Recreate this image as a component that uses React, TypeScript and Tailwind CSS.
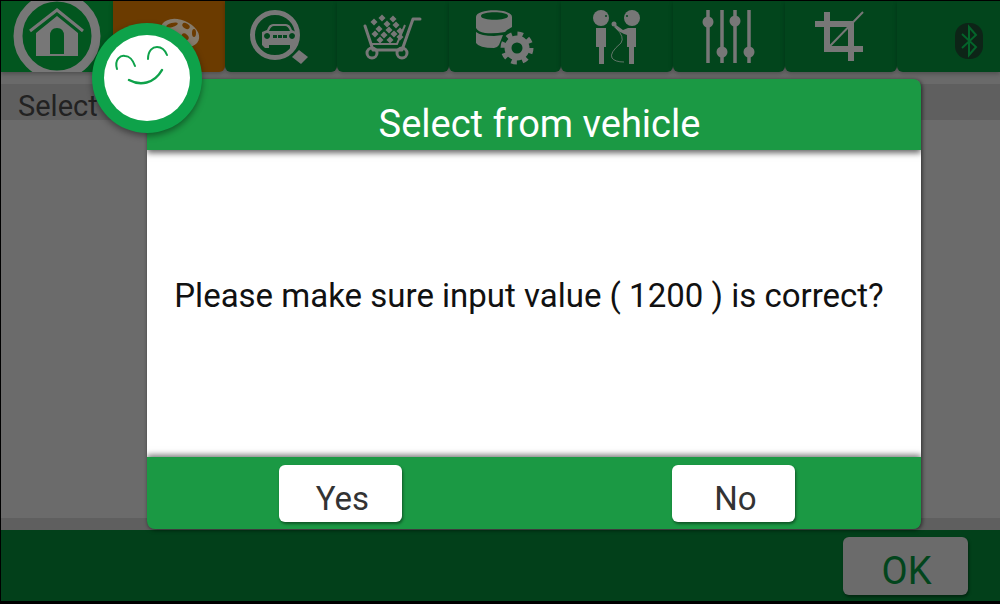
import React from 'react';

const G = '#777777';
const D = '#02451c';

const HomeIcon = () => (
  <svg width="112" height="71" viewBox="0 0 112 71" fill="none">
    <circle cx="56" cy="35" r="39" stroke={G} strokeWidth="9" />
    <path d="M29 30 L56 9 L82 30" stroke={G} strokeWidth="3" />
    <path fillRule="evenodd" clipRule="evenodd" d="M56 15 L77 32 V55 H35 V32 Z M49 53 H63 V35 Q63 27 56 27 Q49 27 49 35 Z" fill={G} />
  </svg>
);

const GlobeIcon = () => (
  <svg width="112" height="71" viewBox="0 0 112 71" fill="none">
    <ellipse cx="67" cy="32" rx="20" ry="13" transform="rotate(22 67 32)" fill="#857b6c" />
    <ellipse cx="59" cy="24" rx="6" ry="2" transform="rotate(-15 59 24)" fill="#6b3b00" />
    <ellipse cx="73" cy="25" rx="4" ry="2.5" transform="rotate(30 73 25)" fill="#6b3b00" />
    <ellipse cx="81" cy="32" rx="2" ry="4" fill="#6b3b00" />
    <ellipse cx="72" cy="36" rx="4" ry="3" transform="rotate(40 72 36)" fill="#6b3b00" />
  </svg>
);

const CarSearchIcon = () => (
  <svg width="112" height="71" viewBox="0 0 112 71" fill="none">
    <circle cx="50" cy="34" r="22.5" stroke={G} strokeWidth="5" />
    <path d="M67 56 L74 49 L83 56 L76 63 Z" fill={G} />
    <path fillRule="evenodd" clipRule="evenodd" d="M42 29 Q44 23 48 23 H61 Q65 23 67 29 L71 31 V44 L69 47 H65 V44 H44 V47 H40 L37 44 V31 Z M44 30 H65 Q63 25 60 25 H49 Q46 25 44 30 Z M42 32 A3 3 0 1 0 42.1 32 Z M67 32 A3 3 0 1 0 67.1 32 Z M48 34 V37 H52 V34 Z M53 34 V37 H57 V34 Z M58 34 V37 H62 V34 Z" fill={G} />
  </svg>
);

const CartIcon = () => (
  <svg width="112" height="71" viewBox="0 0 112 71" fill="none">
    <path d="M28 25 L36 49 H65 L76 18 H83" stroke={G} strokeWidth="3" strokeLinejoin="round" strokeLinecap="round" />
    <path d="M33 43 H60 L68 24" stroke={G} strokeWidth="2" />
    <circle cx="35" cy="52" r="5" stroke={G} strokeWidth="3" />
    <circle cx="65" cy="52" r="5" stroke={G} strokeWidth="3" />
    {[[45,17],[56,18],[37,21],[50,23],[59,24],[42,28],[52,29],[38,33],[47,34],[57,33],[63,30],[43,39],[53,39],[63,36]].map(([x, y], i) => (
      <rect key={i} x={x - 2.5} y={y - 2.5} width="5" height="5" fill={G} transform={`rotate(45 ${x} ${y})`} />
    ))}
  </svg>
);

const DbGearIcon = () => (
  <svg width="112" height="71" viewBox="0 0 112 71" fill="none">
    <path fillRule="evenodd" clipRule="evenodd" d="M27 16 C27 7 63 7 63 16 V26 L58 29 L56 31 Q45 33 36 32 Q29 31 27 27 Z M32 15 C32 20 59 20 59 15 C59 10 32 10 32 15 Z" fill={G} />
    <path d="M27 31 Q32 35 45 35 L54 34 L50 44 Q48 47 45 47 Q30 47 27 42 Z" fill={G} />
    <circle cx="68" cy="47" r="9" stroke={G} strokeWidth="7" />
    <circle cx="68" cy="47" r="14" stroke={G} strokeWidth="5" strokeDasharray="5.5 5.5" />
  </svg>
);

const InterviewIcon = () => (
  <svg width="112" height="71" viewBox="0 0 112 71" fill="none">
    <circle cx="40" cy="17" r="8" fill={G} />
    <circle cx="71" cy="17" r="8" fill={G} />
    <circle cx="45" cy="15" r="1" fill={D} />
    <circle cx="66" cy="15" r="1" fill={D} />
    <path d="M35 27 H45 V46 H43 V63 H38 V46 H35 Z" fill={G} />
    <path d="M67 27 H75 V46 H73 V63 H68 V46 H66 V34 Q59 32 53 26 L55 24 L62 29 Z" fill={G} />
    <circle cx="53" cy="23" r="2.5" fill={G} />
    <path d="M55 27 Q64 36 60 42 Q48 52 51 57 Q54 61 63 61" stroke="#8a8a8a" strokeWidth="0.7" />
  </svg>
);

const SlidersIcon = () => (
  <svg width="112" height="71" viewBox="0 0 112 71" fill="none">
    <path d="M35 9 V62 M49 9 V62 M62 9 V62 M76 9 V62" stroke={G} strokeWidth="3.5" />
    <circle cx="35" cy="21" r="5.5" fill={G} />
    <circle cx="49" cy="51" r="5.5" fill={G} />
    <circle cx="62" cy="20" r="5.5" fill={G} />
    <circle cx="76" cy="51" r="5.5" fill={G} />
  </svg>
);

const CropIcon = () => (
  <svg width="112" height="71" viewBox="0 0 112 71" fill="none">
    <path d="M30 23 H66 V60 M42 11 V48 H78" stroke={G} strokeWidth="6" />
    <path d="M45 45 L78 11" stroke={G} strokeWidth="2" />
  </svg>
);

const BluetoothIcon = () => (
  <svg width="28" height="36" viewBox="0 0 28 36" fill="none">
    <rect x="0" y="0" width="28" height="36" rx="13" fill="#0d2417" />
    <path d="M7 11 L21 24 L14 32 V4 L21 12 L7 25" stroke="#04642a" strokeWidth="2" />
  </svg>
);

const Tab = ({ className = 'bg-[#02451c]', children }: { className?: string; children?: React.ReactNode }) => (
  <div className={`h-[71px] w-[112px] shrink-0 overflow-hidden rounded-b-md shadow-[0_2px_4px_rgba(0,0,0,0.25)] ${className}`}>{children}</div>
);

const Smiley = () => (
  <div className="absolute left-[91px] top-[22px] z-20 flex h-[110px] w-[110px] items-center justify-center rounded-full bg-[#0ea24a] shadow-[0_3px_6px_rgba(0,0,0,0.4)]">
    <div className="h-[86px] w-[86px] rounded-full bg-white">
      <svg width="86" height="86" viewBox="0 0 86 86" fill="none">
        <path d="M13 34 C10 24 17 20 21 21 C25 21 29 25 31 31" stroke="#0ea24a" strokeWidth="2" strokeLinecap="round" />
        <path d="M44 24 C44 15 49 12 53 12 C58 12 61 15 63 20" stroke="#0ea24a" strokeWidth="2" strokeLinecap="round" />
        <path d="M25 45 C36 51 50 49 58 35" stroke="#0ea24a" strokeWidth="2.5" strokeLinecap="round" />
      </svg>
    </div>
  </div>
);

const DialogButton = ({ label }: { label: string }) => (
  <button className="flex h-[57px] w-[123px] items-center justify-center rounded-md bg-white pl-[4px] pt-[10px] text-[33px] text-[#333333] shadow-[1px_2px_3px_rgba(0,0,0,0.45)]">
    {label}
  </button>
);

export default function App() {
  return (
    <div className="relative flex h-[604px] w-[1000px] flex-col overflow-hidden border-b-[3px] border-l border-t border-black bg-[#6b6b6b] font-['Roboto',sans-serif]">
      {/* top tabs */}
      <div className="relative z-0 flex h-[71px] shrink-0">
        <Tab className="rounded-b-none bg-[#02561f]"><HomeIcon /></Tab>
        <Tab className="bg-[#6b3b00]"><GlobeIcon /></Tab>
        <Tab><CarSearchIcon /></Tab>
        <Tab><CartIcon /></Tab>
        <Tab><DbGearIcon /></Tab>
        <Tab><InterviewIcon /></Tab>
        <Tab><SlidersIcon /></Tab>
        <Tab><CropIcon /></Tab>
        <div className="flex h-[71px] flex-1 items-center justify-end rounded-bl-md bg-[#02451c] pr-[17px] pt-[9px] shadow-[0_2px_4px_rgba(0,0,0,0.25)]"><BluetoothIcon /></div>
      </div>

      {/* page behind the dialog */}
      <div className="h-[12px] shrink-0 bg-[#6a6a6a]" />
      <div className="flex h-[36px] shrink-0 items-center bg-[#5f5f5f] pl-[17px] pt-[10px] text-[29px] text-[#222222]">Select</div>
      <div className="flex-1 bg-[#6b6b6b]" />
      <div className="h-[12px] shrink-0 bg-[#5f5f5f]" />

      {/* bottom bar */}
      <div className="flex h-[71px] shrink-0 items-start justify-end bg-[#02401a] pr-[32px] pt-[7px]">
        <div className="flex h-[58px] w-[125px] items-center justify-center rounded-md bg-[#6b6b6b] pl-[2px] pt-[11px] text-[38px] text-[#02451c] shadow-[1px_2px_3px_rgba(0,0,0,0.4)]">OK</div>
      </div>

      {/* dialog */}
      <div className="absolute left-[146px] top-[78px] flex h-[450px] w-[774px] flex-col overflow-hidden rounded-lg shadow-[1px_1px_4px_rgba(0,0,0,0.6)]">
        <div className="relative z-10 flex h-[71px] shrink-0 items-center justify-center bg-[#1b9944] pl-[11px] pt-[19px] text-[38px] text-white shadow-[0_3px_6px_rgba(0,0,0,0.6)]">
          Select from vehicle
        </div>
        <div className="flex flex-1 items-center justify-center bg-white pb-[16px] pr-[10px] text-[33px] text-[#111111]">
          Please make sure input value ( 1200 ) is correct?
        </div>
        <div className="flex h-[72px] shrink-0 items-start justify-between bg-[#1b9944] pl-[132px] pr-[126px] pt-[8px] shadow-[0_-2px_6px_rgba(0,0,0,0.55)]">
          <DialogButton label="Yes" />
          <DialogButton label="No" />
        </div>
      </div>

      <Smiley />
    </div>
  );
}
